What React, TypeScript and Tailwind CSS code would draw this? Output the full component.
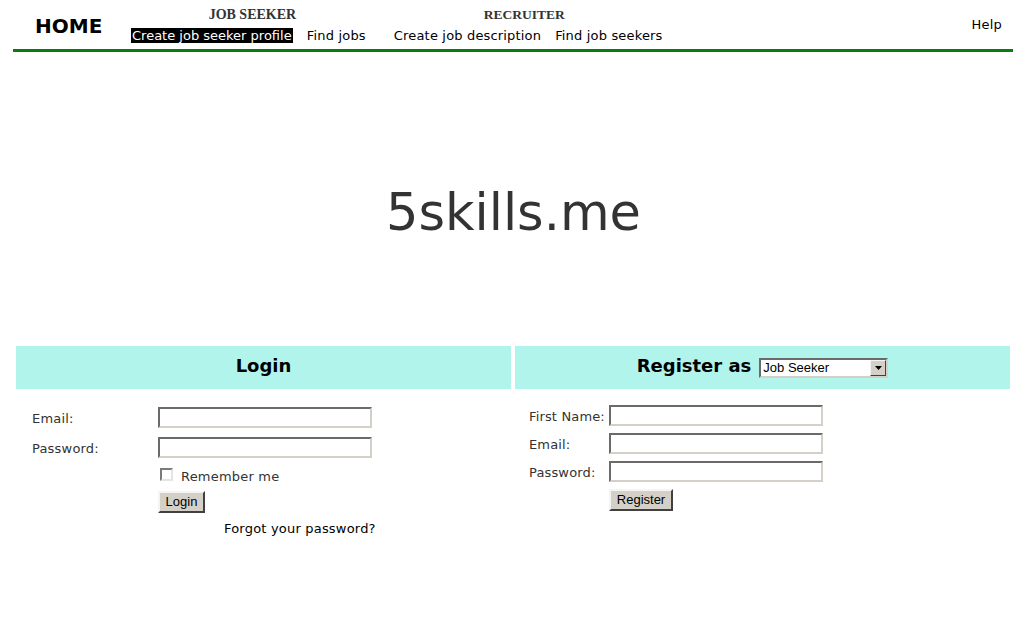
const sans = "font-['DejaVu_Sans',Verdana,sans-serif]";
const serif = "font-['Liberation_Serif','Times_New_Roman',serif]";
const arial = "font-['Liberation_Sans',Arial,sans-serif]";
const inputCls =
  "block w-[214px] h-[21px] bg-white border-2 border-t-[#6a6a6a] border-l-[#6a6a6a] border-b-[#d4d0c8] border-r-[#d4d0c8] outline-none";
const btnCls =
  "block h-[22px] bg-[#d4d0c8] border-2 border-t-[#f4f4f4] border-l-[#f4f4f4] border-b-[#404040] border-r-[#404040] text-[13px] leading-[16px] text-black font-['Liberation_Sans',Arial,sans-serif]";

export default function App() {
  return (
    <div className={`${sans} bg-white w-[1027px] h-[639px] overflow-hidden text-black`}>
      {/* Header */}
      <div className="ml-[13px] w-[1000px] h-[52px] border-b-[3px] border-[#0a7c0a] flex">
        <div className="w-[118px] pl-[22px] pt-[14px] text-[20px] font-bold leading-[24px]">HOME</div>
        <div className="flex flex-col items-center">
          <div className={`${serif} ml-[8px] pt-[7px] text-[14px] font-bold leading-[16px] text-[#333]`}>JOB SEEKER</div>
          <div className="mt-[5px] flex gap-[14px] text-[13px] leading-[15px]">
            <span className="bg-black text-white px-[1px]">Create job seeker profile</span>
            <span className="tracking-[0.2px]">Find jobs</span>
          </div>
        </div>
        <div className="ml-[28px] flex flex-col items-center">
          <div className={`${serif} mr-[8px] pt-[7px] text-[13.5px] font-bold leading-[16px] text-[#333]`}>RECRUITER</div>
          <div className="mt-[5px] flex gap-[14px] text-[13px] leading-[15px] tracking-[0.17px]">
            <span>Create job description</span>
            <span>Find job seekers</span>
          </div>
        </div>
        <div className="flex-1 flex justify-end pr-[11px] pt-[17px] text-[13px] leading-[15px] tracking-[0.2px]">Help</div>
      </div>

      {/* Title */}
      <div className="mt-[131px] text-center text-[51px] leading-[60px] text-[#333]">5skills.me</div>

      {/* Panels */}
      <div className="mt-[103px] ml-[16px] w-[994px] grid grid-cols-2 gap-x-[4px]">
        {/* Login */}
        <div>
          <div className="h-[43px] bg-[#b0f4ec] pt-[9px] text-center text-[18px] font-bold leading-[21px]">Login</div>
          <div className="pl-[16px] pt-[18px] text-[13px] text-[#333] tracking-[0.2px]">
            <div className="flex items-center h-[21px]">
              <div className="w-[126px] leading-[15px] pt-[1px]">Email:</div>
              <input className={inputCls} />
            </div>
            <div className="mt-[9px] flex items-center h-[21px]">
              <div className="w-[126px] leading-[15px] pt-[1px]">Password:</div>
              <input type="password" className={inputCls} />
            </div>
            <div className="mt-[10px] ml-[128px] flex items-start h-[16px]">
              <div className="w-[13px] h-[13px] bg-white border-2 border-t-[#7a7a7a] border-l-[#7a7a7a] border-b-[#e4e4e4] border-r-[#e4e4e4]" />
              <div className="ml-[8px] mt-[1px] leading-[15px]">Remember me</div>
            </div>
            <button className={`${btnCls} mt-[7px] ml-[126px] w-[47px] tracking-normal`}>Login</button>
            <div className="mt-[8px] ml-[192px] leading-[15px] text-black">Forgot your password?</div>
          </div>
        </div>

        {/* Register */}
        <div>
          <div className="h-[43px] bg-[#b0f4ec] pt-[9px] flex items-start justify-center gap-[8px]">
            <div className="text-[18px] font-bold leading-[21px]">Register as</div>
            <div className="mt-[3px] w-[129px] h-[20px] bg-white border-2 border-t-[#6a6a6a] border-l-[#6a6a6a] border-b-[#d4d0c8] border-r-[#d4d0c8] flex items-stretch">
              <div className={`${arial} flex-1 pl-[2px] text-[13px] leading-[16px] text-black`}>Job Seeker</div>
              <div className="w-[16px] bg-[#d4d0c8] border border-t-[#f4f4f4] border-l-[#f4f4f4] border-b-[#404040] border-r-[#404040] flex items-center justify-center">
                <svg width="7" height="4" viewBox="0 0 7 4">
                  <path d="M0 0H7L3.5 4Z" fill="#000" />
                </svg>
              </div>
            </div>
          </div>
          <div className="pl-[14px] pt-[16px] text-[13px] text-[#333] tracking-[0.15px]">
            <div className="flex items-center h-[21px]">
              <div className="w-[80px] leading-[15px] pt-[1px]">First Name:</div>
              <input className={inputCls} />
            </div>
            <div className="mt-[7px] flex items-center h-[21px]">
              <div className="w-[80px] leading-[15px] pt-[1px]">Email:</div>
              <input className={inputCls} />
            </div>
            <div className="mt-[7px] flex items-center h-[21px]">
              <div className="w-[80px] leading-[15px] pt-[1px]">Password:</div>
              <input type="password" className={inputCls} />
            </div>
            <button className={`${btnCls} mt-[7px] ml-[80px] w-[64px] tracking-normal`}>Register</button>
          </div>
        </div>
      </div>
    </div>
  );
}
